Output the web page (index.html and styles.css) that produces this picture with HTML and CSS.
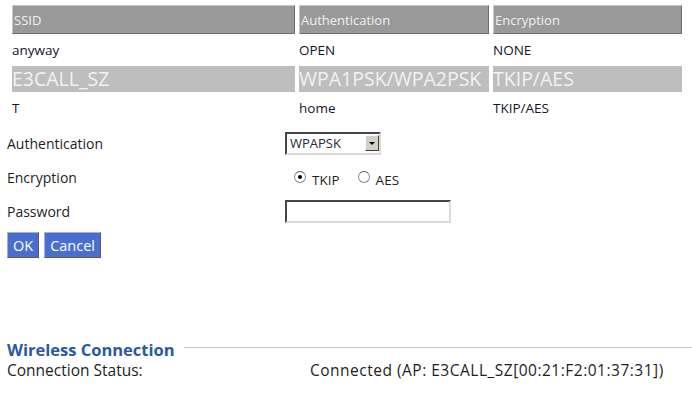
FILE: index.html
```html
<!DOCTYPE html>
<html lang="en">
  <head>
    <meta charset="UTF-8" />
    <title>Wireless</title>
    <link rel="stylesheet" href="styles.css">
  </head>
  <body>
    <table class="ap-list">
      <tr class="head">
        <th class="col-ssid">SSID</th>
        <th class="col-auth">Authentication</th>
        <th class="col-enc">Encryption</th>
      </tr>
      <tr>
        <td>anyway</td>
        <td>OPEN</td>
        <td>NONE</td>
      </tr>
      <tr class="selected">
        <td>E3CALL_SZ</td>
        <td>WPA1PSK/WPA2PSK</td>
        <td>TKIP/AES</td>
      </tr>
      <tr>
        <td>T</td>
        <td>home</td>
        <td>TKIP/AES</td>
      </tr>
    </table>

    <div class="form">
      <label for="auth">Authentication</label>
      <div class="select">
        <select id="auth">
          <option>WPAPSK</option>
          <option>WPA2PSK</option>
        </select>
        <span class="drop"><span class="tri"></span></span>
      </div>

      <label>Encryption</label>
      <div class="radios">
        <input type="radio" name="enc" id="tkip" checked />
        <label for="tkip">TKIP</label>
        <input type="radio" name="enc" id="aes" />
        <label for="aes">AES</label>
      </div>

      <label for="pwd">Password</label>
      <div><input type="password" id="pwd" class="text" /></div>
    </div>

    <div class="buttons">
      <button class="btn">OK</button>
      <button class="btn">Cancel</button>
    </div>

    <div class="section">
      <div class="section-title">
        <span>Wireless Connection</span>
        <span class="rule"></span>
      </div>
      <div class="status">
        <span class="key">Connection Status:</span>
        <span class="value">Connected (AP: E3CALL_SZ[00:21:F2:01:37:31])</span>
      </div>
    </div>
  </body>
</html>
```

FILE: styles.css
```css
body {
  margin: 0;
  background-color: rgb(255, 255, 255);
  color: rgb(30, 30, 30);
  font-family: "Open Sans", sans-serif;
  font-size: 14px;
}

.ap-list {
  border-spacing: 4px;
  margin: 1px 0 0 8px;
}
.ap-list th {
  box-sizing: border-box;
  height: 29px;
  background-color: rgb(153, 153, 153);
  color: rgb(240, 240, 240);
  font-weight: normal;
  font-size: 13px;
  text-align: left;
  padding: 0 0 0 1px;
  border: 1px solid;
  border-color: rgb(200, 200, 200) rgb(110, 110, 110) rgb(110, 110, 110) rgb(200, 200, 200);
}
.col-ssid {
  width: 283px;
}
.col-auth {
  width: 190px;
}
.col-enc {
  width: 189px;
}
.ap-list td {
  height: 24px;
  padding: 0;
  font-size: 13.5px;
  color: rgb(20, 20, 40);
}
.ap-list .selected td {
  height: 26px;
  background-color: rgb(190, 190, 190);
  color: rgb(242, 242, 242);
  font-size: 19.5px;
  line-height: 26px;
}

.form {
  display: grid;
  grid-template-columns: 278px 1fr;
  grid-auto-rows: 34px;
  align-items: center;
  margin: 2px 0 0 7px;
}

.select {
  display: inline-flex;
  align-items: center;
  box-sizing: border-box;
  width: 96px;
  height: 23px;
  border: 2px solid;
  border-color: rgb(70, 70, 70) rgb(220, 218, 210) rgb(220, 218, 210) rgb(70, 70, 70);
  background-color: rgb(255, 255, 255);
}
.select select {
  appearance: none;
  border: none;
  outline: none;
  background: transparent;
  font-family: "Open Sans", sans-serif;
  font-size: 13px;
  color: rgb(40, 40, 60);
  padding: 0 0 0 3px;
  width: 78px;
}
.drop {
  display: flex;
  align-items: center;
  justify-content: center;
  box-sizing: border-box;
  width: 14px;
  height: 16px;
  background-color: rgb(212, 208, 200);
  border: 1px solid;
  border-color: rgb(250, 250, 250) rgb(64, 64, 64) rgb(64, 64, 64) rgb(250, 250, 250);
}
.tri {
  width: 0;
  height: 0;
  border-left: 3px solid transparent;
  border-right: 3px solid transparent;
  border-top: 3px solid rgb(0, 0, 0);
}

.radios {
  display: flex;
  align-items: center;
  padding-left: 9px;
  font-size: 13.5px;
}
.radios label {
  margin: 6px 18px 0 6px;
}
.radios input {
  appearance: none;
  box-sizing: border-box;
  width: 12px;
  height: 12px;
  margin: 0;
  border-radius: 50%;
  border: 1px solid rgb(140, 140, 140);
  border-top-color: rgb(90, 90, 90);
  background-color: rgb(255, 255, 255);
  display: flex;
  align-items: center;
  justify-content: center;
}
.radios input:checked::after {
  content: "";
  width: 4px;
  height: 4px;
  border-radius: 50%;
  background-color: rgb(0, 0, 0);
}

.text {
  box-sizing: border-box;
  width: 166px;
  height: 23px;
  margin: 0;
  border: 2px solid;
  border-color: rgb(70, 70, 70) rgb(220, 218, 210) rgb(220, 218, 210) rgb(70, 70, 70);
}

.buttons {
  display: flex;
  gap: 5px;
  margin: 4px 0 0 7px;
}
.btn {
  box-sizing: border-box;
  height: 26px;
  padding: 0 5px;
  background-color: rgb(74, 110, 206);
  color: rgb(255, 255, 255);
  font-family: "Open Sans", sans-serif;
  font-size: 14.5px;
  border: 1px solid;
  border-color: rgb(160, 175, 220) rgb(90, 90, 100) rgb(90, 90, 100) rgb(160, 175, 220);
  cursor: pointer;
}

.section {
  margin: 81px 0 0 7px;
  font-size: 15.5px;
}
.section-title {
  display: flex;
  align-items: center;
  gap: 9px;
  height: 20px;
  font-weight: bold;
  font-size: 16.5px;
  color: rgb(42, 88, 165);
}
.rule {
  flex: 1;
  height: 1px;
  margin-top: -3px;
  background-color: rgb(200, 200, 200);
}
.status {
  display: flex;
  height: 22px;
  align-items: center;
}
.key {
  width: 303px;
}
.value {
  letter-spacing: 0.5px;
}
```
